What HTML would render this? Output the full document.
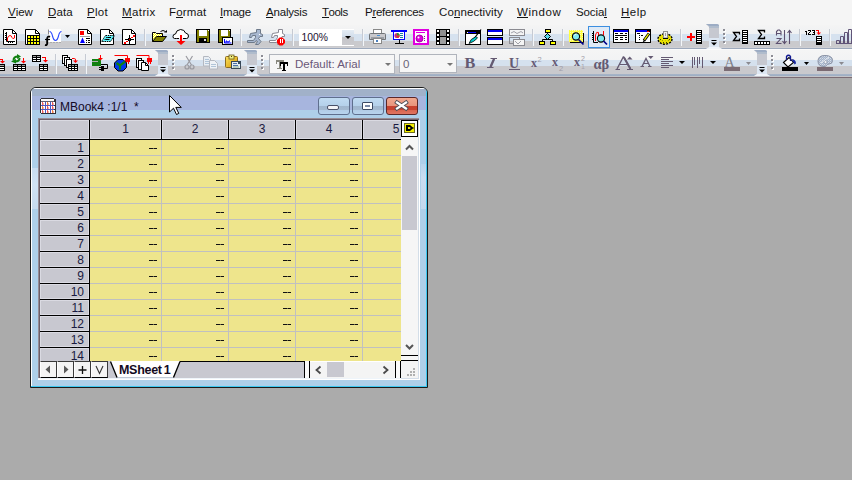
<!DOCTYPE html><html><head><meta charset="utf-8"><style>
*{margin:0;padding:0;box-sizing:border-box}
html,body{width:852px;height:480px;overflow:hidden;background:#ababab;font-family:"Liberation Sans",sans-serif}
.a{position:absolute}
#menu{left:0;top:0;width:852px;height:25px;background:#f5f5f5}
.mi{position:absolute;top:6px;font-size:11.5px;line-height:13px;color:#141414;white-space:nowrap}
.mi u{text-decoration:none;position:relative}
.mi u::after{content:'';position:absolute;left:0;right:0;top:11px;height:1px;background:#141414}
#tb1{left:0;top:25px;width:852px;height:24px;background:linear-gradient(#f4f4f4 0px,#eff1f3 9px,#d6e2ef 9px,#d6e2ef 16px,#cacacd 16px,#cacacd 22px,#cfcfd3 22px,#cfcfd3 23px,#9eaabd 23px,#9eaabd 24px)}
#tb2{left:0;top:49px;width:852px;height:29px;background:linear-gradient(#fbfbfb 0px,#fbfbfb 1px,#f5f5f5 1px,#f2f3f4 11px,#d5e1ee 11px,#d5e1ee 17px,#c9c9cd 17px,#c9c9cd 25px,#a8b6c8 25px,#9cacc2 27px,#c4c4c8 27px,#c4c4c8 28px,#7c6c74 28px,#7c6c74 29px)}
svg{position:absolute;overflow:visible}
.sep{position:absolute;width:2px;border-left:1px solid #bcbcc0;border-right:1px solid #f4f4f4}
#win{left:30px;top:87px;width:398px;height:301px;border:1px solid #1a1a1a;border-radius:6px 6px 0 0;background:#aecfe9;overflow:hidden}
.hd{position:absolute;font-size:12px;color:#1a1a40;text-align:center;line-height:14px}
.rn{position:absolute;font-size:12px;color:#1a1a40;text-align:right;line-height:14px}
.dd{position:absolute;width:4px;height:1px;background:#111}
</style></head><body>
<div id="menu" class="a">
<span class="mi" style="left:8px;letter-spacing:0px"><u>V</u>iew</span>
<span class="mi" style="left:48px;letter-spacing:0.1px"><u>D</u>ata</span>
<span class="mi" style="left:87px;letter-spacing:0.3px"><u>P</u>lot</span>
<span class="mi" style="left:122px;letter-spacing:0.4px"><u>M</u>atrix</span>
<span class="mi" style="left:169px;letter-spacing:0.15px">F<u>o</u>rmat</span>
<span class="mi" style="left:220px;letter-spacing:-0.2px"><u>I</u>mage</span>
<span class="mi" style="left:266px;letter-spacing:-0.2px"><u>A</u>nalysis</span>
<span class="mi" style="left:322px;letter-spacing:-0.5px"><u>T</u>ools</span>
<span class="mi" style="left:365px;letter-spacing:-0.3px">P<u>r</u>eferences</span>
<span class="mi" style="left:439px;letter-spacing:0.1px">Co<u>n</u>nectivity</span>
<span class="mi" style="left:517px;letter-spacing:0.6px"><u>W</u>indow</span>
<span class="mi" style="left:576px;letter-spacing:-0.1px">Socia<u>l</u></span>
<span class="mi" style="left:621px;letter-spacing:0.5px"><u>H</u>elp</span>
</div>
<div id="tb1" class="a"></div><div id="tb2" class="a"></div>
<svg style="left:0;top:0" width="852" height="80" shape-rendering="auto"><defs><linearGradient id="gbtn" x1="0" y1="0" x2="0" y2="1"><stop offset="0" stop-color="#e4ecf4"/><stop offset="0.5" stop-color="#d0dcea"/><stop offset="0.5" stop-color="#c6c6ca"/><stop offset="1" stop-color="#cacace"/></linearGradient></defs><path d="M3.5 29.5H12.5L16.5 33.5V44.5H3.5Z" fill="#fff" stroke="#000"/><path d="M12.5 29.5V33.5H16.5" fill="none" stroke="#000"/><path d="M6.5 32V41.5H15" fill="none" stroke="#000"/><path d="M5 33.5h1M5 35.5h1M5 37.5h1M5 39.5h1M8.5 42v1M10.5 42v1M12.5 42v1" stroke="#000" fill="none"/><path d="M7.5 41V38Q8.5 35.5 10 35.5T12 37.5T14.5 38V35" fill="none" stroke="#f00" stroke-width="1"/><path d="M25.5 29.5H35.5L39.5 33.5V44.5H25.5Z" fill="#fff" stroke="#000"/><path d="M35.5 29.5V33.5H39.5" fill="none" stroke="#000"/><rect x="27" y="35" width="13" height="10" fill="#000"/><rect x="28" y="36" width="2" height="2" fill="#ff0"/><rect x="28" y="39" width="2" height="2" fill="#ff0"/><rect x="28" y="42" width="2" height="2" fill="#ff0"/><rect x="31" y="36" width="2" height="2" fill="#ff0"/><rect x="31" y="39" width="2" height="2" fill="#ff0"/><rect x="31" y="42" width="2" height="2" fill="#ff0"/><rect x="34" y="36" width="2" height="2" fill="#ff0"/><rect x="34" y="39" width="2" height="2" fill="#ff0"/><rect x="34" y="42" width="2" height="2" fill="#ff0"/><rect x="37" y="36" width="2" height="2" fill="#ff0"/><rect x="37" y="39" width="2" height="2" fill="#ff0"/><rect x="37" y="42" width="2" height="2" fill="#ff0"/><rect x="48" y="29" width="13" height="13" fill="#fff"/><path d="M49.5 31.5C51.5 31.5 52 34 52.5 36C53.5 40 54.5 40.5 55.5 40.5C56.5 40.5 57.5 40 58.5 36C59 34 59.5 31.5 61.5 31.5" fill="none" stroke="#2848ff" stroke-width="1.1"/><path d="M48.5 29.5v5" stroke="#888" fill="none"/><path d="M50 42.5h2M53 42.5h2M56 42.5h2M59 42.5h2" stroke="#aaa" fill="none"/><path d="M50 36.8Q47.5 35.8 47.2 38.5V43.5Q47 45.5 45 45" fill="none" stroke="#000" stroke-width="1.9"/><path d="M45 39.5H50" stroke="#000" stroke-width="1.2"/><path d="M65 35h5l-2.5 3z" fill="#000"/><path d="M78.5 29.5H87.5L91.5 33.5V44.5H78.5Z" fill="#fff" stroke="#000"/><path d="M87.5 29.5V33.5H91.5" fill="none" stroke="#000"/><rect x="80" y="31" width="4" height="4" fill="#f00"/><rect x="80" y="36" width="10" height="1" fill="#a0a0a0"/><path d="M82.5 37.5L80 43H85Z" fill="#00f"/><path d="M86 38.5h4M86 40.5h1M88 40.5h2M86 42.5h1M88 42.5h2" stroke="#000" fill="none"/><path d="M100.5 29.5H109.5L113.5 33.5V44.5H100.5Z" fill="#fff" stroke="#000"/><path d="M109.5 29.5V33.5H113.5" fill="none" stroke="#000"/><path d="M105.5 35.5H114.5L110.5 41.5H101.5Z" fill="#60f0f8" stroke="#000" stroke-dasharray="1.5 .8"/><path d="M106 37.5H111M104.5 39.5H109.5" stroke="#000" stroke-width="1"/><path d="M107 37.5L105 39.5" stroke="#40d0e0"/><path d="M122.5 29.5H131.5L135.5 33.5V44.5H122.5Z" fill="#fff" stroke="#000"/><path d="M131.5 29.5V33.5H135.5" fill="none" stroke="#000"/><g fill="#f00"><rect x="124" y="42" width="2" height="2"/><rect x="126" y="41" width="2" height="1"/><rect x="131" y="37" width="2" height="1"/><rect x="133" y="35" width="2" height="2"/></g><path d="M125 39.5h9M129.5 35v9" stroke="#000" fill="none"/><rect x="128" y="38" width="3" height="3" fill="#000"/><rect x="129" y="39" width="1" height="1" fill="#f00"/><rect x="144" y="29" width="1" height="17" fill="#c6cad2"/><rect x="145" y="29" width="1" height="17" fill="#f4f6f8"/><defs><pattern id="dith" width="2" height="2" patternUnits="userSpaceOnUse"><rect width="2" height="2" fill="#ffff00"/><rect width="1" height="1" fill="#fff"/><rect x="1" y="1" width="1" height="1" fill="#fff"/></pattern></defs><path d="M152.5 41.5V32.5H155.5L156.5 33.5H162.5V36.5" fill="url(#dith)" stroke="#000"/><path d="M152.5 41.5L156.5 36.5H166.5L162.5 41.5Z" fill="#808000" stroke="#000"/><path d="M160.5 31.5Q163 29.5 165.5 31.5" fill="none" stroke="#000"/><path d="M164 32.5h3v-2.5z" fill="#000"/><path d="M176.5 38.5H174.5Q173 38.5 173 36.5Q173 34 175.5 34Q176 30 180.5 29.5Q184.5 29.5 185.5 33Q188.5 33.5 188.5 36Q188.5 38.5 186.5 38.5H183" fill="#fff" stroke="#000"/><path d="M176.5 38.5H179" fill="none" stroke="#000"/><rect x="180" y="35" width="2" height="6" fill="#f00"/><path d="M176.5 41h9l-4.5 4z" fill="#f00"/><rect x="196" y="29" width="14" height="14" fill="#000"/><rect x="197" y="30" width="12" height="12" fill="#808000"/><rect x="199" y="30" width="8" height="6" fill="#fff"/><rect x="199" y="38" width="8" height="4" fill="#000"/><rect x="204" y="39" width="2" height="2" fill="#ddd"/><rect x="208" y="30" width="1" height="1" fill="#fff"/><rect x="218" y="29" width="13" height="14" fill="#000"/><rect x="219" y="30" width="11" height="12" fill="#808000"/><rect x="221" y="30" width="7" height="6" fill="#fff"/><rect x="229" y="30" width="1" height="1" fill="#fff"/><rect x="222.5" y="37.5" width="10" height="7" fill="#fff" stroke="#000"/><path d="M224.5 39v4h7M226 43v-2h1v1h2v-1h1" stroke="#00f" fill="none"/><rect x="240" y="29" width="1" height="17" fill="#c6cad2"/><rect x="241" y="29" width="1" height="17" fill="#f4f6f8"/><g transform="translate(0 0)"><path d="M256.5 29.5H260.5V33.5L262.5 34.5V36.5H260L258.5 38.5L261 41.5L258.5 44.5H255.5L257.5 41.5L256 40.5L254.5 42.5H247.5V40.5H253.5L255.5 37.5V35.5H252.5L251.5 37.5H249.5L250.5 33.5L256.5 32.5Z" fill="#a8b8d0" stroke="#6e7a8a" stroke-width="1" stroke-linejoin="round"/><rect x="259" y="34" width="1" height="1" fill="#fff"/></g><g transform="translate(22 0)"><path d="M256.5 29.5H260.5V33.5L262.5 34.5V36.5H260L258.5 38.5L261 41.5L258.5 44.5H255.5L257.5 41.5L256 40.5L254.5 42.5H247.5V40.5H253.5L255.5 37.5V35.5H252.5L251.5 37.5H249.5L250.5 33.5L256.5 32.5Z" fill="#ffffff" stroke="#8a8a94" stroke-width="1" stroke-linejoin="round"/><rect x="259" y="34" width="1" height="1" fill="#fff"/></g><path d="M279.5 37.5h3l2.5 2.5v3l-2.5 2.5h-3l-2.5-2.5v-3z" fill="#f00"/><rect x="280" y="39" width="1" height="4" fill="#fff"/><rect x="282" y="39" width="1" height="4" fill="#fff"/><rect x="292" y="29" width="1" height="17" fill="#c6cad2"/><rect x="293" y="29" width="1" height="17" fill="#f4f6f8"/><rect x="299" y="29" width="55" height="17" fill="#fff"/><rect x="342" y="30" width="12" height="15" fill="url(#gbtn)"/><text x="301.5" y="41" font-family="Liberation Sans" font-size="11.5" fill="#1a1030" textLength="26.5" lengthAdjust="spacingAndGlyphs">100%</text><path d="M345 36h6l-3.0 3z" fill="#000"/><rect x="362" y="29" width="1" height="17" fill="#c6cad2"/><rect x="363" y="29" width="1" height="17" fill="#f4f6f8"/><rect x="373.5" y="29.5" width="8" height="4" fill="#fff" stroke="#888"/><path d="M370.5 33.5h14a1 1 0 0 1 1 1v5h-16v-5a1 1 0 0 1 1-1z" fill="#c8c8cc" stroke="#707478"/><rect x="371" y="37" width="13" height="2" fill="#9a9ea4"/><rect x="377" y="35" width="3" height="1" fill="#4a90d0"/><rect x="373.5" y="38.5" width="8" height="5" fill="#fff" stroke="#888"/><rect x="376" y="40" width="2" height="2" fill="#4a80c0"/><rect x="391" y="30" width="16" height="2" fill="#00f"/><rect x="393.5" y="31.5" width="11" height="8" fill="#fff" stroke="#00f"/><circle cx="397" cy="35.5" r="2.6" fill="#c03080"/><path d="M397 35.5V32.9A2.6 2.6 0 0 1 399.6 35.5Z" fill="#20a020"/><path d="M397 35.5H399.6A2.6 2.6 0 0 1 397 38.1Z" fill="#e03030"/><path d="M400 33.5h3M400 35.5h3M400 37.5h3" stroke="#2080a0" fill="none"/><path d="M399.5 40v3M395 43.5h9" stroke="#000" fill="none"/><rect x="413" y="29" width="16" height="16" fill="#e000e0"/><rect x="415" y="31" width="12" height="12" fill="#fff"/><rect x="416" y="32" width="9" height="1" fill="#e000e0"/><circle cx="419.5" cy="38.5" r="3.5" fill="#e000e0" stroke="#900090" stroke-width=".8"/><circle cx="418.5" cy="37.5" r="1" fill="#fff"/><rect x="424" y="36" width="1" height="1" fill="#a000a0"/><rect x="424" y="38" width="1" height="1" fill="#a000a0"/><rect x="424" y="40" width="1" height="1" fill="#a000a0"/><rect x="436" y="29" width="14" height="16" fill="#000"/><rect x="437" y="30" width="2" height="2" fill="#fff"/><rect x="447" y="30" width="2" height="2" fill="#fff"/><rect x="437" y="34" width="2" height="2" fill="#fff"/><rect x="447" y="34" width="2" height="2" fill="#fff"/><rect x="437" y="38" width="2" height="2" fill="#fff"/><rect x="447" y="38" width="2" height="2" fill="#fff"/><rect x="437" y="42" width="2" height="2" fill="#fff"/><rect x="447" y="42" width="2" height="2" fill="#fff"/><rect x="440" y="30" width="6" height="6" fill="#909090"/><rect x="440" y="37" width="6" height="7" fill="#a0a0a0"/><rect x="458" y="29" width="1" height="17" fill="#c6cad2"/><rect x="459" y="29" width="1" height="17" fill="#f4f6f8"/><rect x="465.5" y="30.5" width="15" height="14" fill="#fff" stroke="#000"/><rect x="466" y="31" width="14" height="3" fill="#000"/><rect x="468" y="32" width="8" height="1" fill="#00f"/><rect x="467" y="32" width="1" height="1" fill="#fff"/><path d="M481 29.5L473 40" stroke="#000" stroke-width="1.2"/><path d="M476 36.5Q470 39 469 43.5Q474 42 477.5 38Z" fill="#0cc" stroke="#000" stroke-width=".8"/><rect x="487.5" y="29.5" width="15" height="6" fill="#fff" stroke="#000"/><rect x="488" y="30" width="14" height="2" fill="#0000f0"/><rect x="487.5" y="37.5" width="15" height="7" fill="#fff" stroke="#000"/><rect x="488" y="38" width="14" height="2" fill="#0000f0"/><rect x="509.5" y="29.5" width="15" height="6" fill="#f4f4f4" stroke="#8a8a90"/><path d="M511 33L514 31.5L517 33.5L521 31.5L523 33" stroke="#a0a0a8" fill="none"/><rect x="509.5" y="37.5" width="10" height="6" fill="none" stroke="#8a8a90"/><rect x="513.5" y="39.5" width="11" height="6" fill="#f4f4f4" stroke="#8a8a90"/><path d="M515 41L518 44L521 41" stroke="#a0a0a8" fill="none"/><rect x="532" y="29" width="1" height="17" fill="#c6cad2"/><rect x="533" y="29" width="1" height="17" fill="#f4f6f8"/><path d="M547.5 32V34M542.5 41V39.5H552.5V41M547.5 39.5v-0" stroke="#000" fill="none"/><path d="M547.5 33.5L550.5 36.5L547.5 39.5L544.5 36.5Z" fill="#5cd8e8" stroke="#000"/><rect x="545" y="29" width="6" height="4" fill="#000"/><rect x="546" y="30" width="4" height="2" fill="#ff0"/><rect x="539" y="41" width="6" height="4" fill="#000"/><rect x="540" y="42" width="4" height="2" fill="#ff0"/><rect x="550" y="41" width="6" height="4" fill="#000"/><rect x="551" y="42" width="4" height="2" fill="#ff0"/><rect x="562" y="29" width="1" height="17" fill="#c6cad2"/><rect x="563" y="29" width="1" height="17" fill="#f4f6f8"/><defs><pattern id="dith2" width="2" height="2" patternUnits="userSpaceOnUse"><rect width="2" height="2" fill="#ffff40"/><rect width="1" height="1" fill="#f8f8c0"/></pattern></defs><rect x="569" y="30" width="14" height="12" fill="url(#dith2)"/><path d="M583.5 33V42.5H570" fill="none" stroke="#000"/><circle cx="576" cy="36.5" r="3.6" fill="#7fe8f0" stroke="#000" stroke-width="1.1"/><path d="M574.5 35.5q.5-1.5 2-1.5" stroke="#fff" fill="none"/><path d="M578.5 39.5L583.5 44.5" stroke="#00008a" stroke-width="1.7"/><rect x="588.5" y="26.5" width="21" height="21" fill="#dfeaf6" stroke="#3c8ee0"/><path d="M593.5 31v11.5H598" stroke="#000" fill="none"/><path d="M592 33.5h1M592 35.5h1M592 37.5h1M592 39.5h1" stroke="#000"/><path d="M595.5 41V35Q596.5 31 598.5 32.5V36M603.5 31v4" stroke="#f00" fill="none"/><circle cx="601" cy="38.5" r="3.6" fill="#7fe8f0" stroke="#000" stroke-width="1.1"/><path d="M603.5 41L607 44.5" stroke="#00008a" stroke-width="1.7"/><rect x="613.5" y="29.5" width="15" height="13" fill="#fff" stroke="#000"/><rect x="614" y="30" width="14" height="2" fill="#0000f0"/><path d="M615 33.5h3M620 33.5h3M625 33.5h2M615 35.5h12M615 37.5h3M620 37.5h3M625 37.5h2M615 39.5h3M620 39.5h3M625 39.5h2" stroke="#000"/><rect x="635.5" y="29.5" width="15" height="13" fill="#fff" stroke="#000"/><rect x="636" y="30" width="11" height="2" fill="#0000f0"/><rect x="647" y="30" width="3" height="2" fill="#000"/><rect x="647" y="31" width="2" height="1" fill="#f00"/><path d="M637 33.5h3M639 35.5h1M641 35.5h2M639 37.5h1M639 39.5h1" stroke="#000"/><path d="M649 33.5L644 40.5" stroke="#000" stroke-width="3"/><path d="M648.6 33.8L644.4 39.8" stroke="#ff0" stroke-width="1.2"/><path d="M642.5 42.5L644 39.5L645.5 41Z" fill="#000"/><ellipse cx="665" cy="39" rx="7" ry="5.2" fill="#e8e000" stroke="#000" stroke-width="1.4" stroke-dasharray="2 1.2"/><defs><pattern id="dith4" width="3" height="3" patternUnits="userSpaceOnUse"><rect width="3" height="3" fill="#e8e000"/><rect width="1" height="1" fill="#404000"/><rect x="2" y="1" width="1" height="1" fill="#a0a000"/></pattern></defs><ellipse cx="665" cy="39.5" rx="5.5" ry="3.8" fill="url(#dith4)"/><ellipse cx="665" cy="38.5" rx="3" ry="2" fill="#f0f000"/><rect x="663.5" y="31.5" width="4" height="6.5" fill="#f0f0f0" stroke="#909090"/><rect x="663" y="38" width="5" height="1" fill="#000"/><rect x="665" y="33" width="1" height="3" fill="#a0a0a0"/><rect x="680" y="29" width="1" height="17" fill="#c6cad2"/><rect x="681" y="29" width="1" height="17" fill="#f4f6f8"/><rect x="687" y="36" width="8" height="2" fill="#f00"/><rect x="690" y="33" width="2" height="8" fill="#f00"/><rect x="696" y="30" width="6" height="14" fill="#000"/><rect x="697" y="31" width="4" height="1" fill="#fff"/><rect x="697" y="33" width="4" height="1" fill="#fff"/><rect x="697" y="35" width="4" height="1" fill="#fff"/><rect x="697" y="37" width="4" height="1" fill="#fff"/><rect x="697" y="39" width="4" height="1" fill="#fff"/><rect x="697" y="41" width="4" height="1" fill="#fff"/><path d="M706 24H717Q719 24 719 27V47L722 49H706L709 47V27Z" fill="#c6c8d0"/><rect x="709" y="25" width="10" height="3" fill="#b0bccc"/><path d="M706 24H717Q719 24 719 26H709Z" fill="#9cacc4"/><rect x="709" y="38" width="10" height="9" fill="#dde7f3"/><path d="M706 49L709 47H719L722 49Z" fill="#f0f4fa"/><rect x="711.5" y="40" width="5" height="1" fill="#000"/><path d="M711.0 42.5h6l-3 3z" fill="#000"/><rect x="724" y="30" width="2" height="2" fill="#fff"/><rect x="723" y="29" width="2" height="2" fill="#8c8c94"/><rect x="724" y="34" width="2" height="2" fill="#fff"/><rect x="723" y="33" width="2" height="2" fill="#8c8c94"/><rect x="724" y="38" width="2" height="2" fill="#fff"/><rect x="723" y="37" width="2" height="2" fill="#8c8c94"/><rect x="724" y="42" width="2" height="2" fill="#fff"/><rect x="723" y="41" width="2" height="2" fill="#8c8c94"/><path d="M739.5 34.5V32.5H733.5L736.5 36.5L733.5 40.5H739.5V38.5" fill="none" stroke="#000" stroke-width="1.3" stroke-linejoin="miter"/><rect x="742" y="30" width="6" height="14" fill="#000"/><rect x="743" y="31" width="4" height="1" fill="#fff"/><rect x="743" y="33" width="4" height="1" fill="#fff"/><rect x="743" y="35" width="4" height="1" fill="#fff"/><rect x="743" y="37" width="4" height="1" fill="#fff"/><rect x="743" y="39" width="4" height="1" fill="#fff"/><rect x="743" y="41" width="4" height="1" fill="#fff"/><path d="M764.5 32.5V30.5H758.5L761.5 34.5L758.5 38.5H764.5V36.5" fill="none" stroke="#000" stroke-width="1.3" stroke-linejoin="miter"/><rect x="754" y="41" width="16" height="4" fill="#000"/><rect x="755" y="42" width="2" height="2" fill="#fff"/><rect x="758" y="42" width="2" height="2" fill="#fff"/><rect x="761" y="42" width="2" height="2" fill="#fff"/><rect x="764" y="42" width="2" height="2" fill="#fff"/><rect x="767" y="42" width="2" height="2" fill="#fff"/><path d="M776.5 35.5V31.5L778 30H779.5L781 31.5V35.5M776.5 33.5H781" fill="none" stroke="#5c5070" stroke-width="1.1"/><path d="M776.5 38.5H781L776.5 43.5H781.5" fill="none" stroke="#5c5070" stroke-width="1.1"/><path d="M784.5 30v13M782.5 41l2 2.5 2-2.5M789.5 44V31M787.5 33l2-2.5 2 2.5" stroke="#5c5070" stroke-width="1.1" fill="none"/><rect x="799" y="29" width="1" height="17" fill="#c6cad2"/><rect x="800" y="29" width="1" height="17" fill="#f4f6f8"/><g fill="#000" shape-rendering="crispEdges"><rect x="806" y="31" width="1" height="4"/><rect x="805" y="31" width="1" height="1"/><rect x="808" y="30" width="3" height="1"/><rect x="810" y="31" width="1" height="1"/><rect x="809" y="32" width="1" height="1"/><rect x="808" y="33" width="1" height="1"/><rect x="808" y="34" width="3" height="1"/><rect x="812" y="30" width="3" height="1"/><rect x="814" y="31" width="1" height="3"/><rect x="813" y="32" width="2" height="1"/><rect x="812" y="34" width="3" height="1"/></g><rect x="816" y="30" width="3" height="1" fill="#f00"/><rect x="818" y="30" width="1" height="3" fill="#f00"/><path d="M816.5 32.5h4.5l-2.25 2.5z" fill="#f00"/><rect x="816" y="36" width="6" height="9" fill="#000"/><rect x="817" y="37" width="4" height="1" fill="#fff"/><rect x="817" y="39" width="4" height="1" fill="#fff"/><rect x="817" y="41" width="4" height="1" fill="#fff"/><rect x="829" y="29" width="1" height="17" fill="#c6cad2"/><rect x="830" y="29" width="1" height="17" fill="#f4f6f8"/><path d="M836.5 43.5v-3h3v3M840.5 43.5v-7h3v7M844.5 43.5v-11h3v11M848.5 43.5V29.5h3v14zM836 43.5h16" fill="none" stroke="#605478"/><rect x="0" y="59" width="3" height="1" fill="#f00"/><rect x="2" y="59" width="1" height="3" fill="#f00"/><path d="M0 61h5l-2.5 2.5z" fill="#f00"/><rect x="0" y="64" width="5" height="7" fill="#000"/><path d="M0 65.5h4M0 67.5h4M0 69.5h4" stroke="#fff"/><path d="M0 65.5h4" stroke="#a0a0a0"/><path d="M13.5 60.5Q13.5 56.5 18 56.5" fill="none" stroke="#108010" stroke-width="2"/><path d="M17 54l4 2.5-4 2.5z" fill="#108010"/><path d="M19.5 58Q19.5 61.5 15 61.5" fill="none" stroke="#108010" stroke-width="2"/><path d="M16 59l-5 2.5 5 2z" fill="#108010"/><rect x="23" y="58" width="1" height="3" fill="#f00"/><path d="M21 61h5l-2.5 2.5z" fill="#f00"/><rect x="13" y="64" width="13" height="7" fill="#000"/><rect x="14" y="65" width="3" height="1" fill="#a0a0a0"/><rect x="14" y="67" width="3" height="1" fill="#fff"/><rect x="14" y="69" width="3" height="1" fill="#fff"/><rect x="18" y="65" width="3" height="1" fill="#a0a0a0"/><rect x="18" y="67" width="3" height="1" fill="#fff"/><rect x="18" y="69" width="3" height="1" fill="#fff"/><rect x="22" y="65" width="3" height="1" fill="#a0a0a0"/><rect x="22" y="67" width="3" height="1" fill="#fff"/><rect x="22" y="69" width="3" height="1" fill="#fff"/><rect x="32" y="55" width="9" height="7" fill="#000"/><rect x="33" y="56" width="3" height="1" fill="#a0a0a0"/><rect x="33" y="58" width="3" height="1" fill="#fff"/><rect x="33" y="60" width="3" height="1" fill="#fff"/><rect x="37" y="56" width="3" height="1" fill="#a0a0a0"/><rect x="37" y="58" width="3" height="1" fill="#fff"/><rect x="37" y="60" width="3" height="1" fill="#fff"/><rect x="42" y="57" width="4" height="1" fill="#f00"/><rect x="45" y="57" width="1" height="4" fill="#f00"/><path d="M43 60h5l-2.5 2.5z" fill="#f00"/><rect x="39" y="64" width="9" height="7" fill="#000"/><rect x="40" y="65" width="3" height="1" fill="#a0a0a0"/><rect x="40" y="67" width="3" height="1" fill="#fff"/><rect x="40" y="69" width="3" height="1" fill="#fff"/><rect x="44" y="65" width="3" height="1" fill="#a0a0a0"/><rect x="44" y="67" width="3" height="1" fill="#fff"/><rect x="44" y="69" width="3" height="1" fill="#fff"/><rect x="55" y="54" width="1" height="20" fill="#c6cad2"/><rect x="56" y="54" width="1" height="20" fill="#f4f6f8"/><rect x="62.5" y="55.5" width="5" height="8" fill="#fff" stroke="#000"/><rect x="64.5" y="57.5" width="5" height="8" fill="#fff" stroke="#000"/><rect x="66.5" y="59.5" width="5" height="8" fill="#fff" stroke="#000"/><path d="M72 58.5h2.5q1 0 1 1.5v1" stroke="#f00" fill="none"/><path d="M73 60.5h5l-2.5 2.5z" fill="#f00"/><rect x="68" y="64" width="10" height="7" fill="#000"/><rect x="69" y="65" width="2" height="1" fill="#a0a0a0"/><rect x="69" y="67" width="2" height="1" fill="#fff"/><rect x="69" y="69" width="2" height="1" fill="#fff"/><rect x="72" y="65" width="2" height="1" fill="#a0a0a0"/><rect x="72" y="67" width="2" height="1" fill="#fff"/><rect x="72" y="69" width="2" height="1" fill="#fff"/><rect x="75" y="65" width="2" height="1" fill="#a0a0a0"/><rect x="75" y="67" width="2" height="1" fill="#fff"/><rect x="75" y="69" width="2" height="1" fill="#fff"/><rect x="85" y="54" width="1" height="20" fill="#c6cad2"/><rect x="86" y="54" width="1" height="20" fill="#f4f6f8"/><rect x="92" y="59" width="9" height="7" fill="#108010"/><rect x="92" y="61" width="6" height="1" fill="#b0b0b0"/><rect x="100" y="55" width="1" height="4" fill="#f00"/><path d="M98 58h5l-2.5 2.5z" fill="#f00"/><path d="M101 64.5h6.5v4h-4" stroke="#000" fill="none"/><rect x="101" y="66" width="3" height="5" fill="#000"/><path d="M99 67.5h2M99 69.5h2" stroke="#000"/><path d="M114.5 55.5h13v3" stroke="#f00" fill="none"/><rect x="125" y="58" width="5" height="4" fill="#f00"/><path d="M126.5 62v2M128.5 62v2" stroke="#f00"/><path d="M118 59.5h5l3.5 3.5v4.5l-3.5 3.5h-5l-3.5-3.5v-4.5z" fill="#0038f0" stroke="#000"/><path d="M116.5 63l3.5 2.5 3.5-2.5 1.5-1.5M120 65.5v4" stroke="#108010" stroke-width="2.2" fill="none"/><path d="M136.5 55.5h12.5v3" stroke="#f00" fill="none"/><rect x="147" y="58" width="5" height="4" fill="#f00"/><path d="M148.5 62v2M150.5 62v2" stroke="#f00"/><rect x="136.5" y="58.5" width="5" height="9" fill="#fff" stroke="#000"/><rect x="138.5" y="60.5" width="5" height="9" fill="#fff" stroke="#000"/><path d="M141.5 62.5h4l3 3v5h-7z" fill="#fff" stroke="#000"/><path d="M145.5 62.5v3h3" fill="none" stroke="#000"/><path d="M155 50H166Q168 50 168 53V74L171 76H155L158 74V53Z" fill="#c6c8d0"/><rect x="158" y="51" width="10" height="3" fill="#b0bccc"/><path d="M155 50H166Q168 50 168 52H158Z" fill="#9cacc4"/><rect x="158" y="65" width="10" height="9" fill="#dde7f3"/><path d="M155 76L158 74H168L171 76Z" fill="#f0f4fa"/><rect x="160.5" y="67" width="5" height="1" fill="#000"/><path d="M160.0 69.5h6l-3 3z" fill="#000"/><rect x="173" y="56" width="2" height="2" fill="#fff"/><rect x="172" y="55" width="2" height="2" fill="#8c8c94"/><rect x="173" y="60" width="2" height="2" fill="#fff"/><rect x="172" y="59" width="2" height="2" fill="#8c8c94"/><rect x="173" y="64" width="2" height="2" fill="#fff"/><rect x="172" y="63" width="2" height="2" fill="#8c8c94"/><rect x="173" y="68" width="2" height="2" fill="#fff"/><rect x="172" y="67" width="2" height="2" fill="#8c8c94"/><path d="M186 56L191.5 65M192.5 56L187 65" stroke="#9a9aa0" stroke-width="1.2" fill="none"/><circle cx="187" cy="67" r="2" fill="none" stroke="#9a9aa0" stroke-width="1.2"/><circle cx="192" cy="67" r="2" fill="none" stroke="#9a9aa0" stroke-width="1.2"/><path d="M203.5 56.5h5l2 2v7.5h-7z" fill="#e8eef4" stroke="#b4b8c0"/><path d="M205 59.5h4M205 61.5h4M205 63.5h4" stroke="#b0c4d8"/><path d="M209.5 60.5h5l3 3v5.5h-8z" fill="#eef2f6" stroke="#b4b8c0"/><path d="M211 64.5h5M211 66.5h5" stroke="#b0c4d8"/><defs><linearGradient id="gold" x1="0" y1="0" x2="1" y2="1"><stop offset="0" stop-color="#f8e060"/><stop offset="1" stop-color="#d89800"/></linearGradient></defs><rect x="225.5" y="56.5" width="12" height="11" rx="1" fill="url(#gold)" stroke="#8a6a20"/><rect x="229" y="55" width="5" height="4" fill="#f0f080" stroke="#6a5a20" stroke-width=".8"/><rect x="231" y="56" width="1" height="1" fill="#503010"/><rect x="231.5" y="61.5" width="9" height="7" fill="#e4ecf2" stroke="#384858"/><path d="M233 63.5h4M233 65.5h5" stroke="#4a70a8"/><path d="M233 67h6" stroke="#90b090"/><rect x="238" y="62" width="2" height="2" fill="#385060"/><path d="M244 50H255Q257 50 257 53V74L260 76H244L247 74V53Z" fill="#c6c8d0"/><rect x="247" y="51" width="10" height="3" fill="#b0bccc"/><path d="M244 50H255Q257 50 257 52H247Z" fill="#9cacc4"/><rect x="247" y="65" width="10" height="9" fill="#dde7f3"/><path d="M244 76L247 74H257L260 76Z" fill="#f0f4fa"/><rect x="249.5" y="67" width="5" height="1" fill="#000"/><path d="M249.0 69.5h6l-3 3z" fill="#000"/><rect x="262" y="56" width="2" height="2" fill="#fff"/><rect x="261" y="55" width="2" height="2" fill="#8c8c94"/><rect x="262" y="60" width="2" height="2" fill="#fff"/><rect x="261" y="59" width="2" height="2" fill="#8c8c94"/><rect x="262" y="64" width="2" height="2" fill="#fff"/><rect x="261" y="63" width="2" height="2" fill="#8c8c94"/><rect x="262" y="68" width="2" height="2" fill="#fff"/><rect x="261" y="67" width="2" height="2" fill="#8c8c94"/><rect x="269.5" y="54.5" width="125" height="19" fill="#f6f6f6" stroke="#b0b4bc"/><g shape-rendering="crispEdges"><rect x="276" y="60" width="8" height="2" fill="#8a8a80"/><rect x="276" y="62" width="1" height="2" fill="#8a8a80"/><rect x="283" y="62" width="1" height="1" fill="#8a8a80"/><rect x="279" y="60" width="2" height="9" fill="#8a8a80"/><rect x="277" y="68" width="5" height="1" fill="#8a8a80"/><rect x="280" y="62" width="8" height="2" fill="#000"/><rect x="280" y="64" width="1" height="2" fill="#000"/><rect x="287" y="64" width="1" height="2" fill="#000"/><rect x="283" y="62" width="2" height="9" fill="#000"/><rect x="282" y="70" width="4" height="1" fill="#000"/></g><text x="295" y="68" font-family="Liberation Sans" font-size="11.5" fill="#6a5878">Default: Arial</text><path d="M385 63h6l-3 3z" fill="#777"/><rect x="399.5" y="54.5" width="57" height="18" fill="#f6f6f6" stroke="#b0b4bc"/><text x="403" y="68" font-family="Liberation Sans" font-size="11.5" fill="#6a6478">0</text><path d="M447 63h6l-3 3z" fill="#777"/><text x="464.5" y="68" font-family="Liberation Serif" font-weight="bold" font-size="14.5" fill="#645a72" transform="translate(464.5 0) scale(1.12 1) translate(-464.5 0)">B</text><path d="M490.5 58.5H497M487 67.5H493.5M494.5 58.5L490 67.5" stroke="#645a72" stroke-width="1.2" fill="none"/><path d="M494 59L490.5 67" stroke="#645a72" stroke-width="2.2"/><text x="509" y="68" font-family="Liberation Serif" font-weight="bold" font-size="14" fill="#645a72">U</text><rect x="509" y="69" width="11" height="1" fill="#645a72"/><text x="531" y="67" font-family="Liberation Serif" font-weight="bold" font-size="12" fill="#645a72">x</text><text x="537.5" y="61.5" font-family="Liberation Sans" font-size="7.5" fill="#a09ca8">2</text><text x="552" y="66" font-family="Liberation Serif" font-weight="bold" font-size="12" fill="#645a72">x</text><text x="559" y="70.5" font-family="Liberation Sans" font-size="7.5" fill="#a09ca8">2</text><text x="574" y="66" font-family="Liberation Serif" font-weight="bold" font-size="12" fill="#645a72">x</text><text x="581" y="61" font-family="Liberation Sans" font-size="7" fill="#a09ca8">2</text><text x="581" y="69" font-family="Liberation Sans" font-size="7" fill="#a8a4b0">1</text><text x="593.5" y="69" font-family="Liberation Serif" font-weight="bold" font-size="14.5" fill="#645a72">αβ</text><path d="M617 69L623.5 56.5M623.5 56.5L630.5 69" stroke="#645a72" stroke-width="1.4" fill="none"/><path d="M624 57.5L630.5 69" stroke="#645a72" stroke-width="2" fill="none"/><path d="M619.5 64.5H628M615.5 69.5H620M627 69.5H633" stroke="#645a72" stroke-width="1.2" fill="none"/><path d="M627 59.5h5.5l-2.75-3z" fill="#645a72"/><path d="M642 66.5L646 58.5L650 66.5" stroke="#645a72" stroke-width="1.3" fill="none"/><path d="M643.5 63.5H648.5M640.5 66.5H644M648 66.5H651.5" stroke="#645a72" stroke-width="1.1" fill="none"/><path d="M648 56h5.5l-2.75 3z" fill="#645a72"/><path d="M661 57.5h12M661 59.5h8M661 61.5h12M661 63.5h8M661 65.5h12M661 67.5h8" stroke="#645a72"/><path d="M679 61h6l-3.0 3z" fill="#000"/><path d="M692.5 57v11M694.5 57v8M697.5 57v11M699.5 57v7M702.5 57v11" stroke="#645a72"/><path d="M710 61h6l-3.0 3z" fill="#000"/><text x="724.5" y="66.5" font-family="Liberation Serif" font-size="14" fill="#808088">A</text><rect x="724" y="67" width="16" height="4" fill="#7a6c74"/><path d="M746 62h5l-2.5 3z" fill="#8a8a90"/><path d="M754 50H765Q767 50 767 53V74L770 76H754L757 74V53Z" fill="#c6c8d0"/><rect x="757" y="51" width="10" height="3" fill="#b0bccc"/><path d="M754 50H765Q767 50 767 52H757Z" fill="#9cacc4"/><rect x="757" y="65" width="10" height="9" fill="#dde7f3"/><path d="M754 76L757 74H767L770 76Z" fill="#f0f4fa"/><rect x="759.5" y="67" width="5" height="1" fill="#000"/><path d="M759.0 69.5h6l-3 3z" fill="#000"/><rect x="772" y="56" width="2" height="2" fill="#fff"/><rect x="771" y="55" width="2" height="2" fill="#8c8c94"/><rect x="772" y="60" width="2" height="2" fill="#fff"/><rect x="771" y="59" width="2" height="2" fill="#8c8c94"/><rect x="772" y="64" width="2" height="2" fill="#fff"/><rect x="771" y="63" width="2" height="2" fill="#8c8c94"/><rect x="772" y="68" width="2" height="2" fill="#fff"/><rect x="771" y="67" width="2" height="2" fill="#8c8c94"/><path d="M783.5 62.5L789 57.5L793.5 62.5L788 67Z" fill="#fff" stroke="#000" stroke-width="1.1"/><path d="M786.5 60V56.5Q788.5 54 790.5 56.5V61" stroke="#101890" stroke-width="1.3" fill="none"/><path d="M792 59Q796 59.5 796 63.5L794.5 64.5Q794 62 792.5 61.5Z" fill="#1a2aa0"/><rect x="782" y="67" width="16" height="4" fill="#000"/><path d="M804 62h5l-2.5 3z" fill="#000"/><defs><pattern id="dith3" width="2" height="2" patternUnits="userSpaceOnUse"><rect width="2" height="2" fill="#a4b4cc"/><rect width="1" height="1" fill="#d8dee8"/><rect x="1" y="1" width="1" height="1" fill="#c0cad8"/></pattern></defs><path d="M818 61Q818 55.5 825 55.5Q832.5 55.5 832.5 60.5Q832.5 64 829 64Q827 64 826.5 65.5Q826 66.5 824 66.5Q818 66.5 818 61Z" fill="url(#dith3)" stroke="#8a92a4"/><circle cx="825.5" cy="62" r="1.6" fill="#eef2f6" stroke="#8a92a4" stroke-width=".7"/><path d="M821 63L829 57" stroke="#e8ecf2" stroke-width="1"/><rect x="817" y="67" width="16" height="4" fill="#7a6a72"/><path d="M839 62h5l-2.5 3z" fill="#8a8a90"/></svg>
<div id="win" class="a"><div class="a" style="left:0;top:0;width:1px;height:298px;background:#fff"></div><div class="a" style="left:0;top:0;width:395px;height:1px;background:#fff"></div><div class="a" style="left:1px;top:1px;width:394px;height:7px;background:#a1b1c9"></div><div class="a" style="left:1px;top:8px;width:394px;height:14px;background:#a7b5de"></div><div class="a" style="left:395px;top:0;width:1px;height:299px;background:#3cc8f0"></div><div class="a" style="left:0;top:298px;width:396px;height:1px;background:#3cc8f0"></div></div>
<div class="a" style="left:421px;top:164px;width:5px;height:45px;background:linear-gradient(#b8d4ec,#cadcf0 30%,#c4d8ee)"></div>
<div class="a" style="left:32px;top:168px;width:6px;height:41px;background:linear-gradient(#c8dcf0,#d0e2f4 40%,#c6daee)"></div>
<div class="a" style="left:38px;top:118px;width:381px;height:260px;background:#968c94"></div><div class="a" style="left:39px;top:119px;width:380px;height:259px;background:#6c5e68"></div>
<div class="a" style="left:40px;top:120px;width:361px;height:241px;background:#eee58c"></div>
<div class="a" style="left:40px;top:120px;width:361px;height:19px;background:#c8c8d0"></div>
<div class="a" style="left:40px;top:139px;width:361px;height:1px;background:#000"></div>
<div class="a" style="left:40px;top:140px;width:49px;height:221px;background:#c8c8d0"></div>
<div class="a" style="left:40px;top:120px;width:361px;height:1px;background:#dadae2"></div>
<div class="a" style="left:40px;top:138px;width:361px;height:1px;background:#dadae2"></div>
<div class="a" style="left:40px;top:120px;width:1px;height:241px;background:#dadae2"></div>
<div class="a" style="left:88px;top:120px;width:1px;height:241px;background:#dadae2"></div>
<div class="a" style="left:90px;top:120px;width:1px;height:18px;background:#dadae2"></div>
<div class="a" style="left:162px;top:120px;width:1px;height:18px;background:#dadae2"></div>
<div class="a" style="left:160px;top:120px;width:1px;height:18px;background:#dadae2"></div>
<div class="a" style="left:229px;top:120px;width:1px;height:18px;background:#dadae2"></div>
<div class="a" style="left:227px;top:120px;width:1px;height:18px;background:#dadae2"></div>
<div class="a" style="left:296px;top:120px;width:1px;height:18px;background:#dadae2"></div>
<div class="a" style="left:294px;top:120px;width:1px;height:18px;background:#dadae2"></div>
<div class="a" style="left:363px;top:120px;width:1px;height:18px;background:#dadae2"></div>
<div class="a" style="left:361px;top:120px;width:1px;height:18px;background:#dadae2"></div>
<div class="a" style="left:41px;top:154px;width:47px;height:1px;background:#dadae2"></div>
<div class="a" style="left:41px;top:156px;width:47px;height:1px;background:#dadae2"></div>
<div class="a" style="left:41px;top:170px;width:47px;height:1px;background:#dadae2"></div>
<div class="a" style="left:41px;top:172px;width:47px;height:1px;background:#dadae2"></div>
<div class="a" style="left:41px;top:186px;width:47px;height:1px;background:#dadae2"></div>
<div class="a" style="left:41px;top:188px;width:47px;height:1px;background:#dadae2"></div>
<div class="a" style="left:41px;top:202px;width:47px;height:1px;background:#dadae2"></div>
<div class="a" style="left:41px;top:204px;width:47px;height:1px;background:#dadae2"></div>
<div class="a" style="left:41px;top:218px;width:47px;height:1px;background:#dadae2"></div>
<div class="a" style="left:41px;top:220px;width:47px;height:1px;background:#dadae2"></div>
<div class="a" style="left:41px;top:234px;width:47px;height:1px;background:#dadae2"></div>
<div class="a" style="left:41px;top:236px;width:47px;height:1px;background:#dadae2"></div>
<div class="a" style="left:41px;top:250px;width:47px;height:1px;background:#dadae2"></div>
<div class="a" style="left:41px;top:252px;width:47px;height:1px;background:#dadae2"></div>
<div class="a" style="left:41px;top:266px;width:47px;height:1px;background:#dadae2"></div>
<div class="a" style="left:41px;top:268px;width:47px;height:1px;background:#dadae2"></div>
<div class="a" style="left:41px;top:282px;width:47px;height:1px;background:#dadae2"></div>
<div class="a" style="left:41px;top:284px;width:47px;height:1px;background:#dadae2"></div>
<div class="a" style="left:41px;top:298px;width:47px;height:1px;background:#dadae2"></div>
<div class="a" style="left:41px;top:300px;width:47px;height:1px;background:#dadae2"></div>
<div class="a" style="left:41px;top:314px;width:47px;height:1px;background:#dadae2"></div>
<div class="a" style="left:41px;top:316px;width:47px;height:1px;background:#dadae2"></div>
<div class="a" style="left:41px;top:330px;width:47px;height:1px;background:#dadae2"></div>
<div class="a" style="left:41px;top:332px;width:47px;height:1px;background:#dadae2"></div>
<div class="a" style="left:41px;top:346px;width:47px;height:1px;background:#dadae2"></div>
<div class="a" style="left:41px;top:348px;width:47px;height:1px;background:#dadae2"></div>
<div class="a" style="left:41px;top:140px;width:47px;height:1px;background:#dadae2"></div>
<div class="a" style="left:40px;top:139px;width:361px;height:1px;background:#000"></div>
<div class="a" style="left:89px;top:120px;width:1px;height:241px;background:#000"></div>
<div class="a" style="left:40px;top:155px;width:49px;height:1px;background:#000"></div>
<div class="a" style="left:90px;top:155px;width:311px;height:1px;background:#c0c0c0"></div>
<div class="a" style="left:40px;top:171px;width:49px;height:1px;background:#000"></div>
<div class="a" style="left:90px;top:171px;width:311px;height:1px;background:#c0c0c0"></div>
<div class="a" style="left:40px;top:187px;width:49px;height:1px;background:#000"></div>
<div class="a" style="left:90px;top:187px;width:311px;height:1px;background:#c0c0c0"></div>
<div class="a" style="left:40px;top:203px;width:49px;height:1px;background:#000"></div>
<div class="a" style="left:90px;top:203px;width:311px;height:1px;background:#c0c0c0"></div>
<div class="a" style="left:40px;top:219px;width:49px;height:1px;background:#000"></div>
<div class="a" style="left:90px;top:219px;width:311px;height:1px;background:#c0c0c0"></div>
<div class="a" style="left:40px;top:235px;width:49px;height:1px;background:#000"></div>
<div class="a" style="left:90px;top:235px;width:311px;height:1px;background:#c0c0c0"></div>
<div class="a" style="left:40px;top:251px;width:49px;height:1px;background:#000"></div>
<div class="a" style="left:90px;top:251px;width:311px;height:1px;background:#c0c0c0"></div>
<div class="a" style="left:40px;top:267px;width:49px;height:1px;background:#000"></div>
<div class="a" style="left:90px;top:267px;width:311px;height:1px;background:#c0c0c0"></div>
<div class="a" style="left:40px;top:283px;width:49px;height:1px;background:#000"></div>
<div class="a" style="left:90px;top:283px;width:311px;height:1px;background:#c0c0c0"></div>
<div class="a" style="left:40px;top:299px;width:49px;height:1px;background:#000"></div>
<div class="a" style="left:90px;top:299px;width:311px;height:1px;background:#c0c0c0"></div>
<div class="a" style="left:40px;top:315px;width:49px;height:1px;background:#000"></div>
<div class="a" style="left:90px;top:315px;width:311px;height:1px;background:#c0c0c0"></div>
<div class="a" style="left:40px;top:331px;width:49px;height:1px;background:#000"></div>
<div class="a" style="left:90px;top:331px;width:311px;height:1px;background:#c0c0c0"></div>
<div class="a" style="left:40px;top:347px;width:49px;height:1px;background:#000"></div>
<div class="a" style="left:90px;top:347px;width:311px;height:1px;background:#c0c0c0"></div>
<div class="a" style="left:161px;top:120px;width:1px;height:19px;background:#000"></div>
<div class="a" style="left:161px;top:140px;width:1px;height:221px;background:#c0c0c0"></div>
<div class="a" style="left:228px;top:120px;width:1px;height:19px;background:#000"></div>
<div class="a" style="left:228px;top:140px;width:1px;height:221px;background:#c0c0c0"></div>
<div class="a" style="left:295px;top:120px;width:1px;height:19px;background:#000"></div>
<div class="a" style="left:295px;top:140px;width:1px;height:221px;background:#c0c0c0"></div>
<div class="a" style="left:362px;top:120px;width:1px;height:19px;background:#000"></div>
<div class="a" style="left:362px;top:140px;width:1px;height:221px;background:#c0c0c0"></div>
<div class="hd" style="left:90px;top:122px;width:71px">1</div>
<div class="hd" style="left:162px;top:122px;width:66px">2</div>
<div class="hd" style="left:229px;top:122px;width:66px">3</div>
<div class="hd" style="left:296px;top:122px;width:66px">4</div>
<div class="hd" style="left:363px;top:122px;width:66px">5</div>
<div class="rn" style="left:40px;top:141px;width:44px">1</div>
<div class="dd" style="left:149px;top:148px;width:8px;background:linear-gradient(90deg,#111 0,#111 4px,#6a6a50 4px,#6a6a50 5px,#111 5px)"></div>
<div class="dd" style="left:216px;top:148px;width:8px;background:linear-gradient(90deg,#111 0,#111 4px,#6a6a50 4px,#6a6a50 5px,#111 5px)"></div>
<div class="dd" style="left:283px;top:148px;width:8px;background:linear-gradient(90deg,#111 0,#111 4px,#6a6a50 4px,#6a6a50 5px,#111 5px)"></div>
<div class="dd" style="left:350px;top:148px;width:8px;background:linear-gradient(90deg,#111 0,#111 4px,#6a6a50 4px,#6a6a50 5px,#111 5px)"></div>
<div class="rn" style="left:40px;top:157px;width:44px">2</div>
<div class="dd" style="left:149px;top:164px;width:8px;background:linear-gradient(90deg,#111 0,#111 4px,#6a6a50 4px,#6a6a50 5px,#111 5px)"></div>
<div class="dd" style="left:216px;top:164px;width:8px;background:linear-gradient(90deg,#111 0,#111 4px,#6a6a50 4px,#6a6a50 5px,#111 5px)"></div>
<div class="dd" style="left:283px;top:164px;width:8px;background:linear-gradient(90deg,#111 0,#111 4px,#6a6a50 4px,#6a6a50 5px,#111 5px)"></div>
<div class="dd" style="left:350px;top:164px;width:8px;background:linear-gradient(90deg,#111 0,#111 4px,#6a6a50 4px,#6a6a50 5px,#111 5px)"></div>
<div class="rn" style="left:40px;top:173px;width:44px">3</div>
<div class="dd" style="left:149px;top:180px;width:8px;background:linear-gradient(90deg,#111 0,#111 4px,#6a6a50 4px,#6a6a50 5px,#111 5px)"></div>
<div class="dd" style="left:216px;top:180px;width:8px;background:linear-gradient(90deg,#111 0,#111 4px,#6a6a50 4px,#6a6a50 5px,#111 5px)"></div>
<div class="dd" style="left:283px;top:180px;width:8px;background:linear-gradient(90deg,#111 0,#111 4px,#6a6a50 4px,#6a6a50 5px,#111 5px)"></div>
<div class="dd" style="left:350px;top:180px;width:8px;background:linear-gradient(90deg,#111 0,#111 4px,#6a6a50 4px,#6a6a50 5px,#111 5px)"></div>
<div class="rn" style="left:40px;top:189px;width:44px">4</div>
<div class="dd" style="left:149px;top:196px;width:8px;background:linear-gradient(90deg,#111 0,#111 4px,#6a6a50 4px,#6a6a50 5px,#111 5px)"></div>
<div class="dd" style="left:216px;top:196px;width:8px;background:linear-gradient(90deg,#111 0,#111 4px,#6a6a50 4px,#6a6a50 5px,#111 5px)"></div>
<div class="dd" style="left:283px;top:196px;width:8px;background:linear-gradient(90deg,#111 0,#111 4px,#6a6a50 4px,#6a6a50 5px,#111 5px)"></div>
<div class="dd" style="left:350px;top:196px;width:8px;background:linear-gradient(90deg,#111 0,#111 4px,#6a6a50 4px,#6a6a50 5px,#111 5px)"></div>
<div class="rn" style="left:40px;top:205px;width:44px">5</div>
<div class="dd" style="left:149px;top:212px;width:8px;background:linear-gradient(90deg,#111 0,#111 4px,#6a6a50 4px,#6a6a50 5px,#111 5px)"></div>
<div class="dd" style="left:216px;top:212px;width:8px;background:linear-gradient(90deg,#111 0,#111 4px,#6a6a50 4px,#6a6a50 5px,#111 5px)"></div>
<div class="dd" style="left:283px;top:212px;width:8px;background:linear-gradient(90deg,#111 0,#111 4px,#6a6a50 4px,#6a6a50 5px,#111 5px)"></div>
<div class="dd" style="left:350px;top:212px;width:8px;background:linear-gradient(90deg,#111 0,#111 4px,#6a6a50 4px,#6a6a50 5px,#111 5px)"></div>
<div class="rn" style="left:40px;top:221px;width:44px">6</div>
<div class="dd" style="left:149px;top:228px;width:8px;background:linear-gradient(90deg,#111 0,#111 4px,#6a6a50 4px,#6a6a50 5px,#111 5px)"></div>
<div class="dd" style="left:216px;top:228px;width:8px;background:linear-gradient(90deg,#111 0,#111 4px,#6a6a50 4px,#6a6a50 5px,#111 5px)"></div>
<div class="dd" style="left:283px;top:228px;width:8px;background:linear-gradient(90deg,#111 0,#111 4px,#6a6a50 4px,#6a6a50 5px,#111 5px)"></div>
<div class="dd" style="left:350px;top:228px;width:8px;background:linear-gradient(90deg,#111 0,#111 4px,#6a6a50 4px,#6a6a50 5px,#111 5px)"></div>
<div class="rn" style="left:40px;top:237px;width:44px">7</div>
<div class="dd" style="left:149px;top:244px;width:8px;background:linear-gradient(90deg,#111 0,#111 4px,#6a6a50 4px,#6a6a50 5px,#111 5px)"></div>
<div class="dd" style="left:216px;top:244px;width:8px;background:linear-gradient(90deg,#111 0,#111 4px,#6a6a50 4px,#6a6a50 5px,#111 5px)"></div>
<div class="dd" style="left:283px;top:244px;width:8px;background:linear-gradient(90deg,#111 0,#111 4px,#6a6a50 4px,#6a6a50 5px,#111 5px)"></div>
<div class="dd" style="left:350px;top:244px;width:8px;background:linear-gradient(90deg,#111 0,#111 4px,#6a6a50 4px,#6a6a50 5px,#111 5px)"></div>
<div class="rn" style="left:40px;top:253px;width:44px">8</div>
<div class="dd" style="left:149px;top:260px;width:8px;background:linear-gradient(90deg,#111 0,#111 4px,#6a6a50 4px,#6a6a50 5px,#111 5px)"></div>
<div class="dd" style="left:216px;top:260px;width:8px;background:linear-gradient(90deg,#111 0,#111 4px,#6a6a50 4px,#6a6a50 5px,#111 5px)"></div>
<div class="dd" style="left:283px;top:260px;width:8px;background:linear-gradient(90deg,#111 0,#111 4px,#6a6a50 4px,#6a6a50 5px,#111 5px)"></div>
<div class="dd" style="left:350px;top:260px;width:8px;background:linear-gradient(90deg,#111 0,#111 4px,#6a6a50 4px,#6a6a50 5px,#111 5px)"></div>
<div class="rn" style="left:40px;top:269px;width:44px">9</div>
<div class="dd" style="left:149px;top:276px;width:8px;background:linear-gradient(90deg,#111 0,#111 4px,#6a6a50 4px,#6a6a50 5px,#111 5px)"></div>
<div class="dd" style="left:216px;top:276px;width:8px;background:linear-gradient(90deg,#111 0,#111 4px,#6a6a50 4px,#6a6a50 5px,#111 5px)"></div>
<div class="dd" style="left:283px;top:276px;width:8px;background:linear-gradient(90deg,#111 0,#111 4px,#6a6a50 4px,#6a6a50 5px,#111 5px)"></div>
<div class="dd" style="left:350px;top:276px;width:8px;background:linear-gradient(90deg,#111 0,#111 4px,#6a6a50 4px,#6a6a50 5px,#111 5px)"></div>
<div class="rn" style="left:40px;top:285px;width:44px">10</div>
<div class="dd" style="left:149px;top:292px;width:8px;background:linear-gradient(90deg,#111 0,#111 4px,#6a6a50 4px,#6a6a50 5px,#111 5px)"></div>
<div class="dd" style="left:216px;top:292px;width:8px;background:linear-gradient(90deg,#111 0,#111 4px,#6a6a50 4px,#6a6a50 5px,#111 5px)"></div>
<div class="dd" style="left:283px;top:292px;width:8px;background:linear-gradient(90deg,#111 0,#111 4px,#6a6a50 4px,#6a6a50 5px,#111 5px)"></div>
<div class="dd" style="left:350px;top:292px;width:8px;background:linear-gradient(90deg,#111 0,#111 4px,#6a6a50 4px,#6a6a50 5px,#111 5px)"></div>
<div class="rn" style="left:40px;top:301px;width:44px">11</div>
<div class="dd" style="left:149px;top:308px;width:8px;background:linear-gradient(90deg,#111 0,#111 4px,#6a6a50 4px,#6a6a50 5px,#111 5px)"></div>
<div class="dd" style="left:216px;top:308px;width:8px;background:linear-gradient(90deg,#111 0,#111 4px,#6a6a50 4px,#6a6a50 5px,#111 5px)"></div>
<div class="dd" style="left:283px;top:308px;width:8px;background:linear-gradient(90deg,#111 0,#111 4px,#6a6a50 4px,#6a6a50 5px,#111 5px)"></div>
<div class="dd" style="left:350px;top:308px;width:8px;background:linear-gradient(90deg,#111 0,#111 4px,#6a6a50 4px,#6a6a50 5px,#111 5px)"></div>
<div class="rn" style="left:40px;top:317px;width:44px">12</div>
<div class="dd" style="left:149px;top:324px;width:8px;background:linear-gradient(90deg,#111 0,#111 4px,#6a6a50 4px,#6a6a50 5px,#111 5px)"></div>
<div class="dd" style="left:216px;top:324px;width:8px;background:linear-gradient(90deg,#111 0,#111 4px,#6a6a50 4px,#6a6a50 5px,#111 5px)"></div>
<div class="dd" style="left:283px;top:324px;width:8px;background:linear-gradient(90deg,#111 0,#111 4px,#6a6a50 4px,#6a6a50 5px,#111 5px)"></div>
<div class="dd" style="left:350px;top:324px;width:8px;background:linear-gradient(90deg,#111 0,#111 4px,#6a6a50 4px,#6a6a50 5px,#111 5px)"></div>
<div class="rn" style="left:40px;top:333px;width:44px">13</div>
<div class="dd" style="left:149px;top:340px;width:8px;background:linear-gradient(90deg,#111 0,#111 4px,#6a6a50 4px,#6a6a50 5px,#111 5px)"></div>
<div class="dd" style="left:216px;top:340px;width:8px;background:linear-gradient(90deg,#111 0,#111 4px,#6a6a50 4px,#6a6a50 5px,#111 5px)"></div>
<div class="dd" style="left:283px;top:340px;width:8px;background:linear-gradient(90deg,#111 0,#111 4px,#6a6a50 4px,#6a6a50 5px,#111 5px)"></div>
<div class="dd" style="left:350px;top:340px;width:8px;background:linear-gradient(90deg,#111 0,#111 4px,#6a6a50 4px,#6a6a50 5px,#111 5px)"></div>
<div class="rn" style="left:40px;top:349px;width:44px">14</div>
<div class="dd" style="left:149px;top:356px;width:8px;background:linear-gradient(90deg,#111 0,#111 4px,#6a6a50 4px,#6a6a50 5px,#111 5px)"></div>
<div class="dd" style="left:216px;top:356px;width:8px;background:linear-gradient(90deg,#111 0,#111 4px,#6a6a50 4px,#6a6a50 5px,#111 5px)"></div>
<div class="dd" style="left:283px;top:356px;width:8px;background:linear-gradient(90deg,#111 0,#111 4px,#6a6a50 4px,#6a6a50 5px,#111 5px)"></div>
<div class="dd" style="left:350px;top:356px;width:8px;background:linear-gradient(90deg,#111 0,#111 4px,#6a6a50 4px,#6a6a50 5px,#111 5px)"></div>
<div class="a" style="left:401px;top:120px;width:19px;height:260px;background:#f6f6f6;border-right:1px solid #fff"></div><div class="a" style="left:418px;top:120px;width:1px;height:258px;background:#d4dee8"></div>
<div class="a" style="left:401px;top:120px;width:17px;height:17px;background:#000"></div>
<div class="a" style="left:402px;top:121px;width:15px;height:15px;background:#fff"></div>
<div class="a" style="left:404px;top:123px;width:11px;height:10px;background:#f4f000;border:1px solid #6b6b20"></div>
<svg style="left:404px;top:123px" width="11" height="10"><path d="M2 2H6L8.5 4.3H9.5V5.7H8.5L6 8H2ZM4 4V6H5.6L6.8 5L5.6 4Z" fill="#000" fill-rule="evenodd"/></svg>
<svg style="left:401px;top:137px" width="17" height="17"><path d="M5 12.5l3.5-3.5 3.5 3.5" fill="none" stroke="#555" stroke-width="2"/></svg>
<div class="a" style="left:402px;top:156px;width:15px;height:74px;background:#c8c8d0"></div>
<svg style="left:401px;top:338px" width="17" height="17"><path d="M5 7l3.5 3.5 3.5-3.5" fill="none" stroke="#555" stroke-width="2"/></svg>
<div class="a" style="left:401px;top:355px;width:17px;height:1px;background:#000"></div>
<div class="a" style="left:401px;top:360px;width:17px;height:1px;background:#000"></div>
<div class="a" style="left:40px;top:361px;width:378px;height:17px;background:#c8c8d0"></div>
<div class="a" style="left:180px;top:361px;width:125px;height:1px;background:#000"></div>
<div class="a" style="left:38px;top:378px;width:381px;height:1px;background:#eef4fa"></div>
<div class="a" style="left:38px;top:379px;width:381px;height:1px;background:#fff"></div>
<div class="a" style="left:40px;top:361px;width:17px;height:17px;background:#f4f4f4;border-top:1px solid #3a3a3a;border-right:1px solid #3a3a3a;border-bottom:1px solid #000;border-left:1px solid #fff"></div>
<div class="a" style="left:57px;top:361px;width:17px;height:17px;background:#f4f4f4;border-top:1px solid #3a3a3a;border-right:1px solid #3a3a3a;border-bottom:1px solid #000;border-left:1px solid #fff"></div>
<div class="a" style="left:74px;top:361px;width:17px;height:17px;background:#f4f4f4;border-top:1px solid #3a3a3a;border-right:1px solid #3a3a3a;border-bottom:1px solid #000;border-left:1px solid #fff"></div>
<div class="a" style="left:91px;top:361px;width:17px;height:17px;background:#f4f4f4;border-top:1px solid #3a3a3a;border-right:1px solid #3a3a3a;border-bottom:1px solid #000;border-left:1px solid #fff"></div>
<svg style="left:40px;top:361px" width="17" height="16"><path d="M5.5 8.5l4.5-4v8z" fill="#5a5a5a"/></svg>
<svg style="left:57px;top:361px" width="17" height="16"><path d="M11.5 8.5l-4.5-4v8z" fill="#5a5a5a"/></svg>
<svg style="left:74px;top:361px" width="17" height="16"><path d="M4.5 9h8M8.5 5v8" stroke="#111" stroke-width="1.3"/></svg>
<svg style="left:91px;top:361px" width="17" height="16"><path d="M5 5l3.5 7.5 3.5-7.5" fill="none" stroke="#333" stroke-width="1.1"/></svg>
<svg style="left:108px;top:361px" width="75" height="17"><path d="M2 0L9 16H65L72 0z" fill="#fff"/><path d="M9 16.5H65" stroke="#c0c8d4"/><path d="M2.5 0.5L9 16.5M65.5 16.5L72 0.5" stroke="#000" stroke-width="1.3" fill="none"/></svg>
<div class="a" style="left:119px;top:363px;font-size:12.5px;font-weight:bold;color:#140a1e;line-height:14px;letter-spacing:-0.3px;white-space:nowrap">MSheet&thinsp;1</div>
<div class="a" style="left:304px;top:361px;width:1px;height:17px;background:#000"></div>
<div class="a" style="left:305px;top:361px;width:4px;height:17px;background:#fafafa"></div>
<div class="a" style="left:309px;top:361px;width:1px;height:17px;background:#000"></div>
<div class="a" style="left:310px;top:361px;width:85px;height:17px;background:#f4f4f4;border-top:1px solid #fff"></div>
<div class="a" style="left:327px;top:362px;width:17px;height:15px;background:#c8c8d0"></div>
<svg style="left:310px;top:361px" width="85" height="17"><path d="M10.5 5.5l-4 3.5 4 3.5M73.5 5.5l4 3.5-4 3.5" fill="none" stroke="#4a4a4a" stroke-width="1.8"/></svg>
<div class="a" style="left:395px;top:361px;width:1px;height:17px;background:#000"></div>
<div class="a" style="left:396px;top:361px;width:4px;height:17px;background:#fafafa"></div>
<div class="a" style="left:400px;top:361px;width:1px;height:17px;background:#000"></div>
<div class="a" style="left:401px;top:361px;width:18px;height:18px;background:#f4f4f4;border-right:1px solid #d4deea;border-bottom:1px solid #d4deea"></div>
<svg style="left:401px;top:361px" width="17" height="16" shape-rendering="crispEdges"><g fill="#b0b0b0"><rect x="12" y="7" width="2" height="2"/><rect x="9" y="10" width="2" height="2"/><rect x="12" y="10" width="2" height="2"/><rect x="6" y="13" width="2" height="2"/><rect x="9" y="13" width="2" height="2"/><rect x="12" y="13" width="2" height="2"/></g></svg>
<svg style="left:40px;top:98px" width="16" height="16" shape-rendering="crispEdges"><rect x="0" y="0" width="16" height="16" fill="#303038"/><rect x="1" y="1" width="13" height="2" fill="#fafafa"/><rect x="1" y="3" width="13" height="1" fill="#606070"/><rect x="1" y="4" width="4" height="3" fill="#fff"/><rect x="2" y="4" width="1" height="3" fill="#f06060"/><rect x="3" y="5" width="1" height="2" fill="#f8b0a0"/><rect x="1" y="8" width="4" height="3" fill="#fff"/><rect x="2" y="8" width="1" height="3" fill="#f08040"/><rect x="3" y="9" width="1" height="2" fill="#f8b0a0"/><rect x="1" y="12" width="4" height="3" fill="#fff"/><rect x="2" y="12" width="1" height="3" fill="#e85858"/><rect x="3" y="13" width="1" height="2" fill="#f8b0a0"/><rect x="6" y="4" width="4" height="3" fill="#fff"/><rect x="7" y="4" width="1" height="3" fill="#f08040"/><rect x="8" y="5" width="1" height="2" fill="#f8b0a0"/><rect x="6" y="8" width="4" height="3" fill="#fff"/><rect x="7" y="8" width="1" height="3" fill="#e85858"/><rect x="8" y="9" width="1" height="2" fill="#f8b0a0"/><rect x="6" y="12" width="4" height="3" fill="#fff"/><rect x="7" y="12" width="1" height="3" fill="#f06060"/><rect x="8" y="13" width="1" height="2" fill="#f8b0a0"/><rect x="11" y="4" width="4" height="3" fill="#fff"/><rect x="12" y="4" width="1" height="3" fill="#e85858"/><rect x="13" y="5" width="1" height="2" fill="#f8b0a0"/><rect x="11" y="8" width="4" height="3" fill="#fff"/><rect x="12" y="8" width="1" height="3" fill="#f06060"/><rect x="13" y="9" width="1" height="2" fill="#f8b0a0"/><rect x="11" y="12" width="4" height="3" fill="#fff"/><rect x="12" y="12" width="1" height="3" fill="#f08040"/><rect x="13" y="13" width="1" height="2" fill="#f8b0a0"/><rect x="5" y="4" width="1" height="11" fill="#5058c0"/><rect x="10" y="4" width="1" height="11" fill="#5058c0"/><rect x="1" y="7" width="13" height="1" fill="#5058c0"/><rect x="1" y="11" width="13" height="1" fill="#5058c0"/><rect x="14" y="0" width="2" height="1" fill="#a7b5de"/><rect x="0" y="15" width="1" height="1" fill="#aecfe9"/><rect x="0" y="0" width="1" height="1" fill="#a7b5de"/></svg>
<div class="a" style="left:60px;top:100px;font-size:12px;color:#140a24;line-height:14px;white-space:nowrap">MBook4 :1/1&nbsp;&nbsp;*</div>
<div class="a" style="left:318px;top:97px;width:32px;height:18px;border:1px solid #5f6f8e;border-radius:3px;background:linear-gradient(#c0dbf2 0,#b4d0ea 8px,#a0b6ce 8px,#a4bad2 12px,#b2cce6 12px,#b8d4ee 16px)"></div>
<div class="a" style="left:352px;top:97px;width:32px;height:18px;border:1px solid #5f6f8e;border-radius:3px;background:linear-gradient(#c0dbf2 0,#b4d0ea 8px,#a0b6ce 8px,#a4bad2 12px,#b2cce6 12px,#b8d4ee 16px)"></div>
<div class="a" style="left:386px;top:97px;width:32px;height:18px;border:1px solid #5a2828;border-radius:3px;background:linear-gradient(#f0a890 0,#e8947c 8px,#c8402e 8px,#c64230 12px,#d8644e 12px,#e07460 16px)"></div>
<div class="a" style="left:327px;top:105px;width:12px;height:5px;background:#f4f4f8;border:1px solid #4a5068;border-radius:2px"></div>
<div class="a" style="left:362px;top:102px;width:11px;height:8px;background:#fff;border:1px solid #3c4a64;border-radius:1px"></div>
<div class="a" style="left:365px;top:105px;width:5px;height:2px;background:#7a8aa8"></div>
<svg style="left:395px;top:101px" width="14" height="9"><path d="M2 1.5l9 6M11 1.5l-9 6" stroke="#505058" stroke-width="4" stroke-linecap="square"/><path d="M2 1.5l9 6M11 1.5l-9 6" stroke="#fff" stroke-width="2.2" stroke-linecap="square"/></svg>
<svg style="left:169px;top:95px" width="13" height="21"><path d="M.5 .5v16.5l4-3.8 3 6.3 2.3-1.1-3-6h5.5z" fill="#fff" stroke="#000" stroke-width="1"/></svg>
</body></html>
